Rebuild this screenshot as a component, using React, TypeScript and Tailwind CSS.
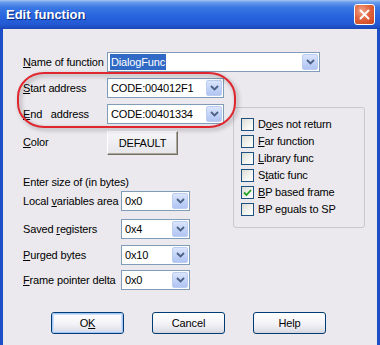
import React from "react";

const font = "font-['Liberation_Sans',Arial,sans-serif] tracking-[-0.15px]";

function Chevron() {
  return (
    <svg width="9" height="6" viewBox="0 0 9 6">
      <path d="M1 1l3.5 3.5L8 1" fill="none" stroke="#4d6185" strokeWidth="1.8" />
    </svg>
  );
}

function Combo({
  className,
  value,
  selected,
}: {
  className: string;
  value: string;
  selected?: boolean;
}) {
  return (
    <div className={`flex items-stretch border border-[#7f9db9] bg-white ${className}`}>
      <div className="flex flex-1 items-center overflow-hidden whitespace-nowrap pl-[2px] text-[11px]">
        {selected ? (
          <span className="bg-[#316ac5] px-[1px] text-white">{value}</span>
        ) : (
          <span className="px-[1px]">{value}</span>
        )}
      </div>
      <div className="m-[1px] flex w-[16px] items-center justify-center rounded-[2px] border border-[#bccdf2] bg-[linear-gradient(180deg,#dbe5fb_0%,#c4d4f8_50%,#b1c5f2_100%)]">
        <Chevron />
      </div>
    </div>
  );
}

function U({ children }: { children: React.ReactNode }) {
  return <span className="underline underline-offset-[1px]">{children}</span>;
}

function Check({ checked, children }: { checked?: boolean; children: React.ReactNode }) {
  return (
    <div className="flex h-[17px] items-center">
      <div className="flex h-[13px] w-[13px] items-center justify-center border border-[#1c5180] bg-[linear-gradient(135deg,#dcdcd7_0%,#f4f4f0_60%,#ffffff_100%)]">
        {checked && (
          <svg width="9" height="9" viewBox="0 0 9 9">
            <path d="M1 4.5l2.5 2.5L8 2" fill="none" stroke="#21a121" strokeWidth="1.8" />
          </svg>
        )}
      </div>
      <span className="ml-[4px] whitespace-nowrap text-[11px]">{children}</span>
    </div>
  );
}

function XpButton({ children, focused }: { children: React.ReactNode; focused?: boolean }) {
  return (
    <div className="flex h-[22px] w-[73px] items-center justify-center rounded-[3px] border border-[#003c74] bg-[linear-gradient(180deg,#ffffff_0%,#f4f4f8_50%,#e2e2ea_85%,#d4d4dc_100%)]">
      <div
        className={`flex h-full w-full items-center justify-center rounded-[2px] text-[11px] ${
          focused ? "border border-[#a4c4f4] shadow-[inset_0_0_0_1px_#cde0fb]" : ""
        }`}
      >
        {children}
      </div>
    </div>
  );
}

function Row({ label, labelW, children, className = "" }: { label: React.ReactNode; labelW: string; children: React.ReactNode; className?: string }) {
  return (
    <div className={`flex items-center ${className}`}>
      <div className={`whitespace-pre text-[11px] ${labelW}`}>{label}</div>
      {children}
    </div>
  );
}

export default function App() {
  return (
    <div className={`relative h-[345px] w-[380px] overflow-hidden bg-[#1c4ec6] ${font} text-black`}>
      {/* title bar */}
      <div className="flex h-[29px] items-center justify-between bg-[linear-gradient(180deg,#a6c6f2_0%,#6a9cec_8%,#3a78e4_25%,#2865de_55%,#2259d2_85%,#1a46b6_100%)] pl-[6px] pr-[5px]">
        <span className="text-[13px] font-bold tracking-[0px] text-white [text-shadow:1px_1px_0_#0a2a82]">Edit function</span>
        <div className="flex h-[21px] w-[21px] items-center justify-center rounded-[3px] border border-white bg-[radial-gradient(circle_at_35%_30%,#f3a488_0%,#e2653f_45%,#c8441c_100%)]">
          <svg width="11" height="11" viewBox="0 0 11 11">
            <path d="M1.5 1.5l8 8M9.5 1.5l-8 8" stroke="white" strokeWidth="2" strokeLinecap="round" />
          </svg>
        </div>
      </div>

      {/* body */}
      <div className="mx-[3px] h-[316px] bg-[#ebe9ed] pl-[20px]">
        <Row label={<><U>N</U>ame of function</>} labelW="w-[84px]" className="pt-[23px]">
          <Combo className="h-[20px] w-[213px]" value="DialogFunc" selected />
        </Row>

        <div className="mt-[6px] flex">
          <div className="flex w-[210px] flex-col">
            <Row label={<><U>S</U>tart address</>} labelW="w-[84px]">
              <Combo className="h-[20px] w-[117px]" value="CODE:004012F1" />
            </Row>
            <Row label={<><U>E</U>nd   address</>} labelW="w-[84px]" className="mt-[6px]">
              <Combo className="h-[20px] w-[117px]" value="CODE:00401334" />
            </Row>
            <div className="mt-[7px] flex items-start">
              <div className="mt-[3px] w-[84px] text-[11px]">
                <U>C</U>olor
              </div>
              <div className="flex h-[24px] w-[71px] items-center justify-center border border-t-white border-l-white border-b-[#716f64] border-r-[#716f64] bg-[linear-gradient(180deg,#f6f6f8_0%,#e6e5ea_100%)] text-[11px] shadow-[inset_-1px_-1px_0_#aca899]">
                DEFAULT
              </div>
            </div>
            <div className="mt-[21px] text-[11px] leading-[13px]">Enter size of (in bytes)</div>
            <Row label={<>Local <U>v</U>ariables area</>} labelW="w-[98px]" className="mt-[2px]">
              <Combo className="h-[20px] w-[69px]" value="0x0" />
            </Row>
            <Row label={<>Saved <U>r</U>egisters</>} labelW="w-[98px]" className="mt-[8px]">
              <Combo className="h-[20px] w-[69px]" value="0x4" />
            </Row>
            <Row label={<><U>P</U>urged bytes</>} labelW="w-[98px]" className="mt-[6px]">
              <Combo className="h-[20px] w-[69px]" value="0x10" />
            </Row>
            <Row label={<><U>F</U>rame pointer delta</>} labelW="w-[98px]" className="mt-[5px]">
              <Combo className="h-[20px] w-[69px]" value="0x0" />
            </Row>
          </div>

          <div className="mt-[29px] h-[121px] w-[132px] rounded-[3px] border border-[#c9c7cf] pl-[7px] pt-[8px]">
            <Check>D<U>o</U>es not return</Check>
            <Check><U>F</U>ar function</Check>
            <Check><U>L</U>ibrary func</Check>
            <Check>S<U>t</U>atic func</Check>
            <Check checked><U>B</U>P based frame</Check>
            <Check>BP eguals to SP</Check>
          </div>
        </div>

        <div className="ml-[28px] mt-[22px] flex gap-[28px]">
          <XpButton focused>O<U>K</U></XpButton>
          <XpButton>Cancel</XpButton>
          <XpButton>Help</XpButton>
        </div>
      </div>

      {/* red annotation around address fields */}
      <svg
        className="pointer-events-none absolute left-[16px] top-[71px] drop-shadow-[2px_2px_2px_rgba(0,0,0,0.35)]"
        width="222"
        height="59"
        viewBox="0 0 222 59"
      >
        <rect x="2" y="2" width="217" height="54" rx="26" ry="24" fill="none" stroke="#e0262e" strokeWidth="2" />
      </svg>
    </div>
  );
}
